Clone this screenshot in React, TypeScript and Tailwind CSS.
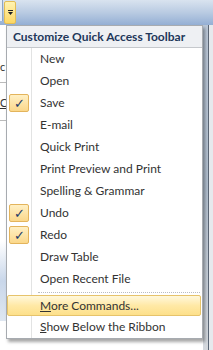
import React from 'react'

const items: { label: string; checked?: boolean }[] = [
  { label: 'New' },
  { label: 'Open' },
  { label: 'Save', checked: true },
  { label: 'E-mail' },
  { label: 'Quick Print' },
  { label: 'Print Preview and Print' },
  { label: 'Spelling & Grammar' },
  { label: 'Undo', checked: true },
  { label: 'Redo', checked: true },
  { label: 'Draw Table' },
  { label: 'Open Recent File' },
]

function Check() {
  return (
    <div className="w-[20px] h-[18px] ml-[2px] flex items-center justify-center rounded-[2px] border border-[#e3b45c] bg-gradient-to-b from-[#fff0c4] to-[#fbd88a] text-[#1e3a66] text-[13px] leading-none">
      ✓
    </div>
  )
}

export default function App() {
  return (
    <div
      className="relative w-[213px] h-[350px] overflow-hidden bg-white text-[12px]"
      style={{ fontFamily: 'Lato, "Noto Sans", sans-serif' }}
    >
      {/* ribbon band */}
      <div className="h-[25px] bg-gradient-to-b from-[#d9e3ef] via-[#b9cbe2] to-[#94afd4] flex items-start">
        <div className="w-[3px] h-[21px] border-r border-[#8ea5c4] bg-[#e6edf5]" />
        <div className="ml-[1px] mt-[1px] w-[12px] h-[23px] rounded-[2px] border border-[#e3bd55] bg-gradient-to-b from-[#fff3b0] to-[#fcd763] flex flex-col items-center justify-center gap-[1px]">
          <div className="w-[5px] h-[1px] bg-[#222]" />
          <svg width="5" height="3" viewBox="0 0 5 3">
            <path d="M0 0 H5 L2.5 3 Z" fill="#222" />
          </svg>
        </div>
      </div>

      {/* left document edge */}
      <div className="absolute left-0 top-[25px] w-[6px] h-[325px] bg-white">
        <div className="mt-[36px] text-[11px] leading-none text-[#333]">c</div>
        <div className="mt-[10px] h-px bg-[#bbb]" />
        <div className="mt-[14px] text-[11px] leading-none text-[#333] underline">C</div>
        <div className="mt-[12px] h-px bg-[#bbb]" />
        <div className="mt-[120px] h-[80px] bg-gradient-to-b from-white via-[#c9d7ea] to-[#dfe7f1]" />
      </div>

      {/* right scrollbar strip */}
      <div className="absolute right-0 top-[25px] w-[10px] h-[325px] flex bg-[#eef0f3]">
        <div className="w-[5px] h-full bg-gradient-to-b from-[#b9c6d6] via-[#aebccc] to-[#d4d8dd]" />
        <div className="w-[1px] h-full bg-[#5b6675]" />
        <div className="flex-1 h-full bg-[#e6e9ed]" />
      </div>

      {/* dropdown menu */}
      <div className="absolute left-[6px] top-[25px] w-[197px] h-[314px] bg-white border border-[#a7abb0] shadow-[2px_3px_3px_rgba(0,0,0,0.35)] flex flex-col">
        <div className="h-[22px] shrink-0 bg-[#eef0f3] border-b border-[#c5c8cc] flex items-center pl-[6px] font-bold text-[12px] text-[#22375a] whitespace-nowrap">
          Customize Quick Access Toolbar
        </div>
        <div className="relative flex-1 flex flex-col">
          <div className="absolute left-[24px] top-0 bottom-0 w-px bg-[#e2e3e3]" />
          {items.map((it) => (
            <div key={it.label} className="relative h-[22px] flex items-center">
              <div className="w-[25px] flex items-center">{it.checked && <Check />}</div>
              <span className="pl-[8px] text-[#333]">{it.label}</span>
            </div>
          ))}
          <div className="relative h-[5px] flex items-center pl-[31px] pr-[2px]">
            <div className="w-full border-t border-dotted border-[#b9bcc0]" />
          </div>
          <div className="relative h-[21px] flex items-center rounded-[2px] border border-[#e6c36b] bg-gradient-to-b from-[#fff8dc] via-[#ffe9a6] to-[#fde08a] mr-[1px]">
            <span className="pl-[32px] text-[#333]">
              <span className="underline">M</span>ore Commands...
            </span>
          </div>
          <div className="relative h-[22px] flex items-center">
            <span className="pl-[33px] text-[#333]">
              <span className="underline">S</span>how Below the Ribbon
            </span>
          </div>
        </div>
      </div>
    </div>
  )
}
